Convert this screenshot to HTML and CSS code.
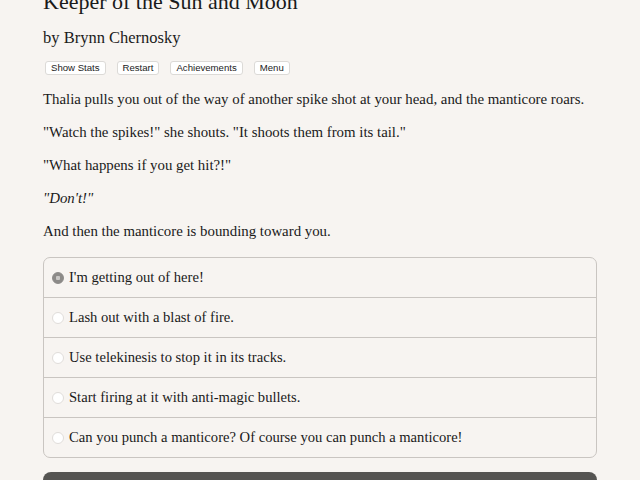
FILE: index.html
```html
<!DOCTYPE html>
<html lang="en">

<head>
    <meta charset="UTF-8">
    <title>Keeper of the Sun and Moon</title>
    <link rel="stylesheet" href="styles.css">
</head>

<body>
    <div class="container">
        <!-- Header -->
        <div class="header">
            <h1 class="game-title">Keeper of the Sun and Moon</h1>
            <h2 class="game-author">by Brynn Chernosky</h2>
            <div class="buttons">
                <button class="spacedLink">Show Stats</button>
                <button class="spacedLink">Restart</button>
                <button class="spacedLink">Achievements</button>
                <button class="spacedLink">Menu</button>
            </div>
        </div>

        <!-- Story text -->
        <div class="text">
            <p>Thalia pulls you out of the way of another spike shot at your head, and the manticore roars.</p>
            <p>"Watch the spikes!" she shouts. "It shoots them from its tail."</p>
            <p>"What happens if you get hit?!"</p>
            <p><i>"Don't!"</i></p>
            <p>And then the manticore is bounding toward you.</p>
        </div>

        <!-- Choices -->
        <form class="choices">
            <label class="choice selected"><span class="radio"></span>I'm getting out of here!</label>
            <label class="choice"><span class="radio"></span>Lash out with a blast of fire.</label>
            <label class="choice"><span class="radio"></span>Use telekinesis to stop it in its tracks.</label>
            <label class="choice"><span class="radio"></span>Start firing at it with anti-magic bullets.</label>
            <label class="choice"><span class="radio"></span>Can you punch a manticore? Of course you can punch a manticore!</label>
        </form>
        <button class="next">Next</button>
    </div>
</body>

</html>
```

FILE: styles.css
```css
/* Global Styles */

* {
    box-sizing: border-box;
    margin: 0;
    padding: 0;
}

body {
    background-color: #f7f4f1;
    color: #1a1a1a;
    font-family: "Liberation Serif", serif;
    font-size: 14.85px;
    overflow: hidden;
}

.container {
    width: 554px;
    margin: -11px 0 0 43px;
}

/* Header */

.game-title {
    font-weight: normal;
    font-size: 22px;
    line-height: 26px;
}

.game-author {
    font-weight: normal;
    font-size: 16.5px;
    line-height: 22px;
    margin-top: 12px;
}

.buttons {
    display: flex;
    gap: 11px;
    margin-top: 12px;
    padding-left: 2px;
}

.spacedLink {
    font-family: "Liberation Sans", Arial, sans-serif;
    font-size: 9.6px;
    color: #222;
    background-color: #ffffff;
    border: 1px solid #dcdad7;
    border-radius: 3px;
    padding: 1px 5px;
    height: 14px;
    line-height: 10px;
}

/* Story text */

.text {
    margin-top: 13px;
}

.text p {
    line-height: 22px;
    margin-bottom: 11px;
}

/* Choices */

.choices {
    margin-top: 15px;
    border: 1px solid #c9c5c1;
    border-radius: 7px;
    display: flex;
    flex-direction: column;
    font-size: 14.6px;
}

.choice {
    display: flex;
    align-items: center;
    height: 40px;
    padding-left: 8px;
    border-top: 1px solid #c9c5c1;
}

.choice:first-child {
    border-top: none;
    height: 39px;
}

.radio {
    width: 12px;
    height: 12px;
    border-radius: 50%;
    border: 1px solid #e0ddda;
    background-color: #ffffff;
    margin-right: 5px;
}

.selected .radio {
    border-color: #8c8a88;
    background-image: radial-gradient(circle, #c9c7c5 0 2px, #8c8a88 2.5px);
}

.next {
    display: block;
    width: 100%;
    height: 50px;
    margin-top: 14px;
    background-color: #555452;
    border: none;
    border-radius: 8px;
    color: #ffffff;
    font-family: "Liberation Serif", serif;
    font-size: 18px;
}
```
